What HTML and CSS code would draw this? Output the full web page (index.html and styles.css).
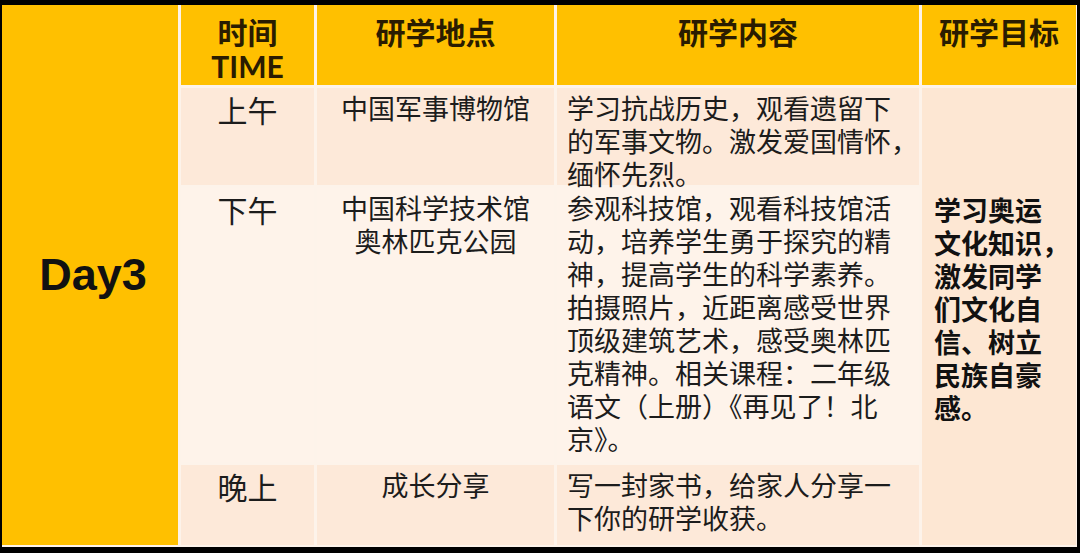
FILE: index.html
```html
<!DOCTYPE html>
<html lang="zh-CN">
<head>
<meta charset="utf-8">
<title>Day3 研学行程</title>
<link rel="stylesheet" href="styles.css">
</head>
<body>
<div class="frame">
  <div class="table">
    <div class="day">Day3</div>

    <div class="head">时间<br><span class="latin">TIME</span></div>
    <div class="head">研学地点</div>
    <div class="head">研学内容</div>
    <div class="head">研学目标</div>

    <div class="cell r1 center time">上午</div>
    <div class="cell r1 center">中国军事博物馆</div>
    <div class="cell r1 text">学习抗战历史，观看遗留下<br>的军事文物。激发爱国情怀，<br>缅怀先烈。</div>

    <div class="goal">学习奥运<br>文化知识，<br>激发同学<br>们文化自<br>信、树立<br>民族自豪<br>感。</div>

    <div class="cell r2 center time">下午</div>
    <div class="cell r2 center">中国科学技术馆<br>奥林匹克公园</div>
    <div class="cell r2 text">参观科技馆，观看科技馆活<br>动，培养学生勇于探究的精<br>神，提高学生的科学素养。<br>拍摄照片，近距离感受世界<br>顶级建筑艺术，感受奥林匹<br>克精神。相关课程：二年级<br>语文（上册）《再见了！北<br>京》。</div>

    <div class="cell r3 center time">晚上</div>
    <div class="cell r3 center">成长分享</div>
    <div class="cell r3 text">写一封家书，给家人分享一<br>下你的研学收获。</div>
  </div>
</div>
</body>
</html>
```

FILE: styles.css
```css
html, body {
  margin: 0;
  padding: 0;
  background: #000;
}

body {
  width: 1080px;
  height: 553px;
  overflow: hidden;
  font-family: "Noto Sans CJK SC", "Noto Sans", sans-serif;
}

.frame {
  padding: 5px 0 0 2px;
}

.table {
  display: grid;
  width: 1073px;
  grid-template-columns: 176px 133px 237px 362px 154px;
  grid-template-rows: 80px 97px 274px 80px;
  gap: 3px;
  padding: 0 2px 2px 0;
  background: #fdf3ea;
}

.day {
  grid-row: 1 / 5;
  grid-column: 1;
  background: #ffc000;
  display: flex;
  align-items: center;
  justify-content: center;
  font-family: "Liberation Sans", Arial, sans-serif;
  font-weight: 700;
  font-size: 45px;
  color: #111;
  padding-left: 6px;
}

.head {
  background: #ffc000;
  color: #2a1c00;
  font-weight: 700;
  font-size: 30px;
  line-height: 34px;
  text-align: center;
  padding-top: 9px;
}

.head .latin {
  font-family: "Lato", "Open Sans", sans-serif;
  font-size: 30px;
}

.cell {
  color: #1c1c1c;
  font-size: 27px;
  line-height: 33px;
  padding-top: 3px;
}

.cell.time {
  font-size: 30px;
  padding-top: 5px;
}

.r1 { background: #fde9d9; }
.r2 { background: #fef3ea; }
.r3 { background: #fde9d9; }

.center {
  text-align: center;
}

.text {
  text-align: left;
  padding-left: 10px;
  white-space: nowrap;
}

.goal {
  grid-row: 2 / 5;
  grid-column: 5;
  background: #fde7d3;
  color: #111;
  font-weight: 700;
  font-size: 27px;
  line-height: 33px;
  padding: 0 0 16px 12px;
  display: flex;
  align-items: center;
  white-space: nowrap;
}
```
